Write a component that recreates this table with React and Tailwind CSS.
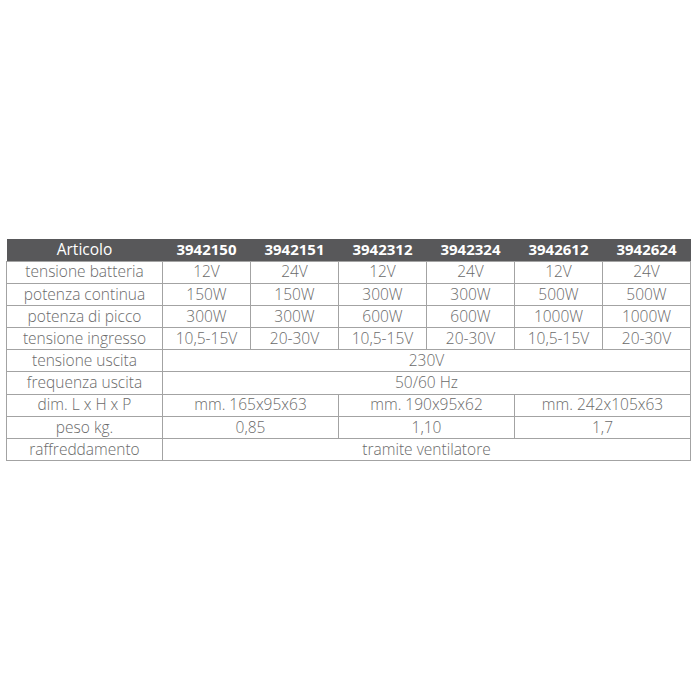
import React from 'react';

const codes = ['3942150', '3942151', '3942312', '3942324', '3942612', '3942624'];

const rows = [
  { label: 'tensione batteria', cells: [['12V', 1], ['24V', 1], ['12V', 1], ['24V', 1], ['12V', 1], ['24V', 1]] },
  { label: 'potenza continua', cells: [['150W', 1], ['150W', 1], ['300W', 1], ['300W', 1], ['500W', 1], ['500W', 1]] },
  { label: 'potenza di picco', cells: [['300W', 1], ['300W', 1], ['600W', 1], ['600W', 1], ['1000W', 1], ['1000W', 1]] },
  { label: 'tensione ingresso', cells: [['10,5-15V', 1], ['20-30V', 1], ['10,5-15V', 1], ['20-30V', 1], ['10,5-15V', 1], ['20-30V', 1]] },
  { label: 'tensione uscita', cells: [['230V', 6]] },
  { label: 'frequenza uscita', cells: [['50/60 Hz', 6]] },
  { label: 'dim. L x H x P', cells: [['mm. 165x95x63', 2], ['mm. 190x95x62', 2], ['mm. 242x105x63', 2]] },
  { label: 'peso kg.', cells: [['0,85', 2], ['1,10', 2], ['1,7', 2]] },
  { label: 'raffreddamento', cells: [['tramite ventilatore', 6]] },
];

const App = () => {
  return (
    <div className="w-[700px] h-[700px] bg-white pt-[239px] pl-[6px]" style={{ fontFamily: '"Open Sans", "Liberation Sans", sans-serif' }}>
      <table className="border-collapse table-fixed w-[683px] text-[15.5px] leading-none">
        <colgroup>
          <col className="w-[156px]" />
          {codes.map(c => <col key={c} className="w-[88px]" />)}
        </colgroup>
        <thead>
          <tr className="h-[22px] bg-[#58585a] text-white">
            <th className="font-normal text-center p-0">Articolo</th>
            {codes.map(c => (
              <th key={c} className="font-bold text-center p-0 text-[15px]">{c}</th>
            ))}
          </tr>
        </thead>
        <tbody className="text-[#6a6a6a] font-light">
          {rows.map(row => (
            <tr key={row.label} className="h-[22.2px]">
              <td className="border border-[#a3a3a3] text-center p-0">{row.label}</td>
              {row.cells.map(([v, span], i) => (
                <td key={i} colSpan={span} className="border border-[#a3a3a3] text-center p-0">{v}</td>
              ))}
            </tr>
          ))}
        </tbody>
      </table>
    </div>
  );
};

export default App;
